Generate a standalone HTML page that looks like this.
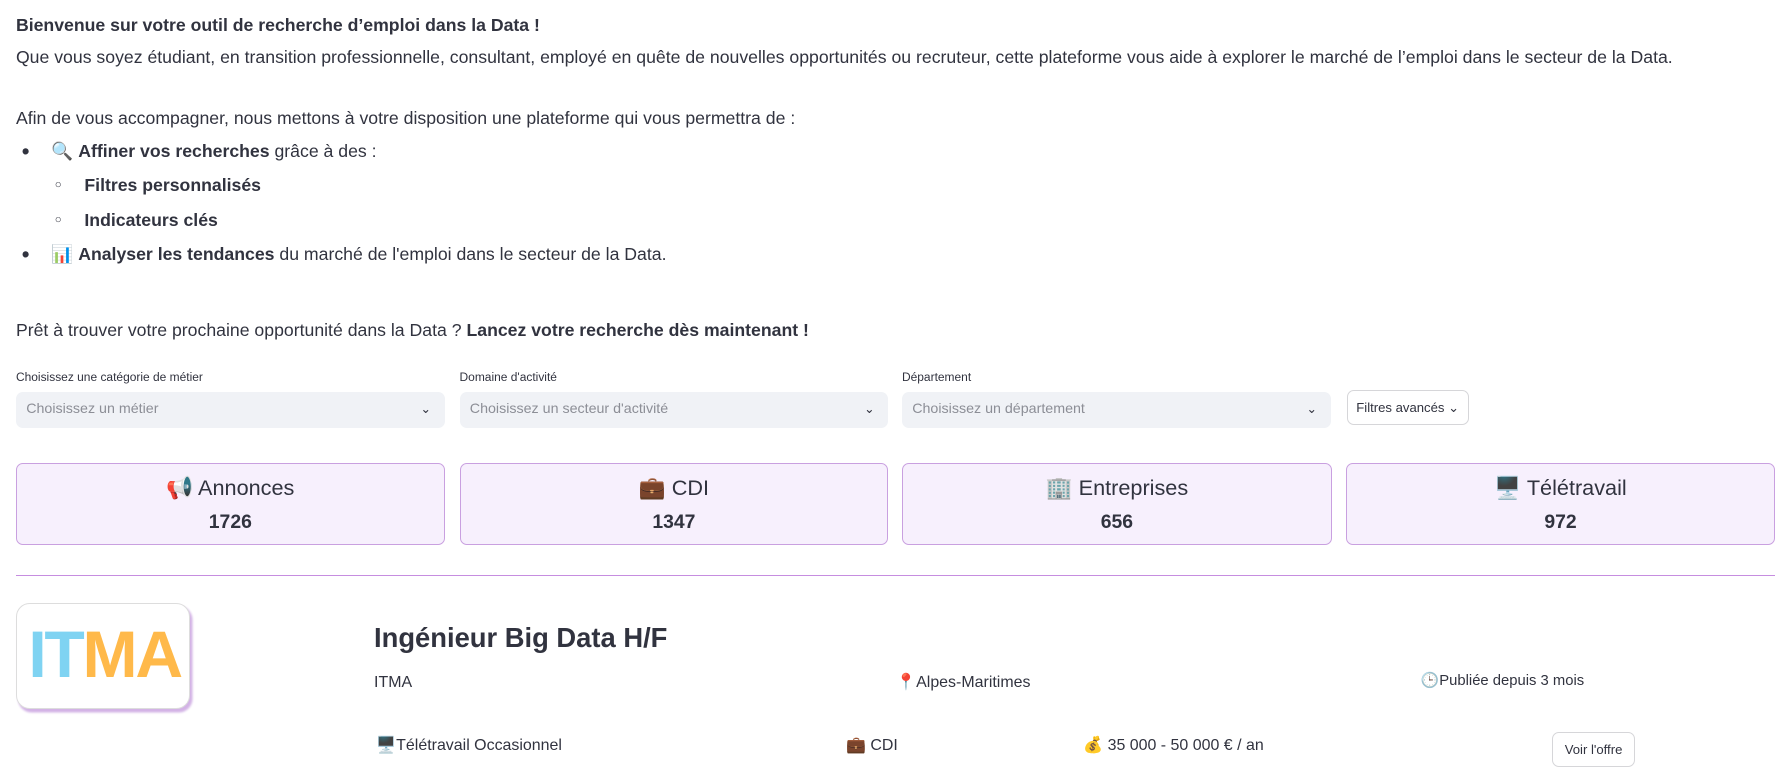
<!DOCTYPE html>
<html><head><meta charset="utf-8"><style>
html,body{margin:0;padding:0;background:#fff;}
body{width:1788px;height:783px;overflow:hidden;}
#w{zoom:1.1403;width:1568px;height:687px;position:relative;font-family:"Liberation Sans","DejaVu Sans",sans-serif;color:#31333f;font-size:15.5px;}
.a{position:absolute;white-space:nowrap;line-height:20px;}
b{font-weight:700;}
.lbl{font-size:10.5px;}
.sel{position:absolute;top:344px;height:31px;background:#f0f2f6;border-radius:6px;color:#8c8e96;font-size:12.5px;line-height:31px;padding-left:9px;box-sizing:border-box;}
.sel i{position:absolute;right:12px;top:0;font-style:normal;color:#31333f;font-size:11px;}
.card{position:absolute;top:406px;height:72px;background:#f7f0fd;border:1px solid #c9a0e0;border-radius:6px;box-sizing:border-box;text-align:center;}
.card .t{font-size:19px;margin-top:9px;line-height:24px;}
.card .n{font-size:17px;font-weight:700;margin-top:8px;}
.btn{position:absolute;border:1px solid #d6d6d9;border-radius:6px;background:#fff;font-size:11.5px;text-align:center;box-sizing:border-box;}
</style></head><body><div id="w">
<div class="a" style="left:14px;top:12px"><b>Bienvenue sur votre outil de recherche d’emploi dans la Data !</b></div>
<div class="a" style="left:14px;top:40px">Que vous soyez étudiant, en transition professionnelle, consultant, employé en quête de nouvelles opportunités ou recruteur, cette plateforme vous aide à explorer le marché de l’emploi dans le secteur de la Data.</div>
<div class="a" style="left:14px;top:94px">Afin de vous accompagner, nous mettons à votre disposition une plateforme qui vous permettra de :</div>
<div class="a" style="left:19px;top:123px;font-size:20px">•</div>
<div class="a" style="left:45px;top:123px">🔍 <b>Affiner vos recherches</b> grâce à des :</div>
<div class="a" style="left:48px;top:153px;font-size:10px">○</div>
<div class="a" style="left:74px;top:153px"><b>Filtres personnalisés</b></div>
<div class="a" style="left:48px;top:183px;font-size:10px">○</div>
<div class="a" style="left:74px;top:183px"><b>Indicateurs clés</b></div>
<div class="a" style="left:19px;top:213px;font-size:20px">•</div>
<div class="a" style="left:45px;top:213px">📊 <b>Analyser les tendances</b> du marché de l'emploi dans le secteur de la Data.</div>
<div class="a" style="left:14px;top:280px">Prêt à trouver votre prochaine opportunité dans la Data ? <b>Lancez votre recherche dès maintenant !</b></div>

<div class="a lbl" style="left:14px;top:321px">Choisissez une catégorie de métier</div>
<div class="a lbl" style="left:403px;top:321px">Domaine d'activité</div>
<div class="a lbl" style="left:791px;top:321px">Département</div>
<div class="sel" style="left:14px;width:376px">Choisissez un métier<i>⌄</i></div>
<div class="sel" style="left:403px;width:376px">Choisissez un secteur d'activité<i>⌄</i></div>
<div class="sel" style="left:791px;width:376px">Choisissez un département<i>⌄</i></div>
<div class="btn" style="left:1181px;top:342px;width:107px;height:31px;line-height:29px;">Filtres avancés ⌄</div>

<div class="card" style="left:14px;width:376px"><div class="t">📢 Annonces</div><div class="n">1726</div></div>
<div class="card" style="left:403px;width:376px"><div class="t">💼 CDI</div><div class="n">1347</div></div>
<div class="card" style="left:791px;width:377px"><div class="t">🏢 Entreprises</div><div class="n">656</div></div>
<div class="card" style="left:1180px;width:377px"><div class="t">🖥️ Télétravail</div><div class="n">972</div></div>

<div style="position:absolute;left:14px;top:504px;width:1543px;height:1px;background:#c68de0"></div>

<div style="position:absolute;left:14px;top:529px;width:153px;height:93px;border:1px solid #ddd;border-radius:12px;box-shadow:2px 3px 2px #d3b3e6;box-sizing:border-box;overflow:hidden;background:#fff">
<div style="position:absolute;left:10px;top:12px;font-size:58px;font-weight:700;line-height:66px;letter-spacing:-2px;"><span style="color:#7fd3f2">IT</span><span style="color:#ffb94a">MA</span></div></div>

<div class="a" style="left:328px;top:545px;font-size:24px;line-height:30px;font-weight:700">Ingénieur Big Data H/F</div>
<div class="a" style="left:328px;top:589px;font-size:14px">ITMA</div>
<div class="a" style="left:786px;top:589px;font-size:14px">📍Alpes-Maritimes</div>
<div class="a" style="left:1246px;top:588px;font-size:13px">🕒Publiée depuis 3 mois</div>
<div class="a" style="left:330px;top:645px;font-size:14px">🖥️Télétravail Occasionnel</div>
<div class="a" style="left:742px;top:645px;font-size:14px">💼 CDI</div>
<div class="a" style="left:950px;top:645px;font-size:14px">💰 35 000 - 50 000 € / an</div>
<div class="btn" style="left:1361px;top:642px;width:73px;height:31px;line-height:29px;">Voir l'offre</div>
</div></body></html>
